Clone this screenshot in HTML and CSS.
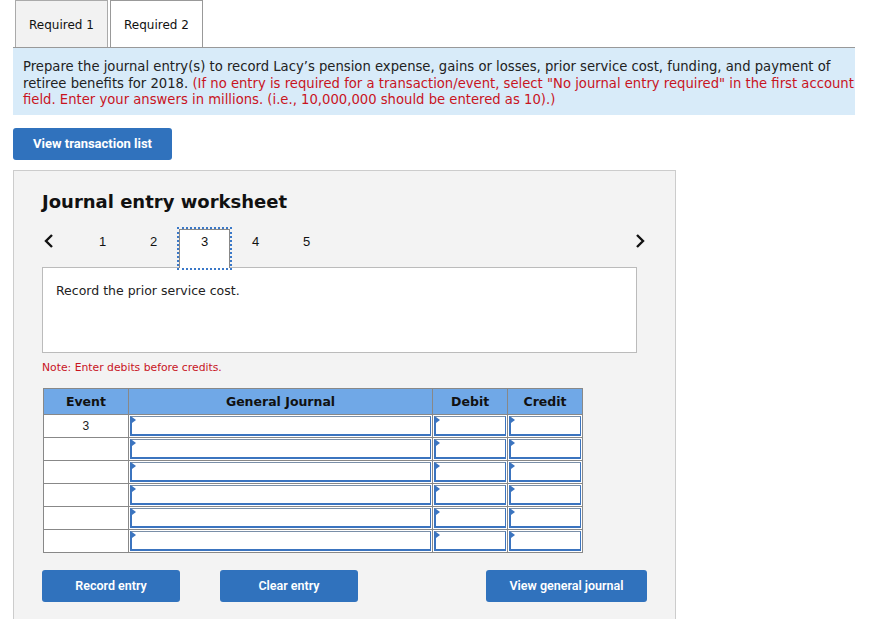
FILE: index.html
```html
<!DOCTYPE html>
<html lang="en">
<head>
    <meta charset="UTF-8">
    <title>Journal entry worksheet</title>
    <link rel="stylesheet" href="styles.css">
</head>
<body>
    <div class="page">
        <div class="tabs">
            <div class="tab">Required 1</div>
            <div class="tab active">Required 2</div>
        </div>

        <div class="instructions">
            Prepare the journal entry(s) to record Lacy’s pension expense, gains or losses, prior service cost, funding, and payment of retiree benefits for 2018.
            <span class="red">(If no entry is required for a transaction/event, select "No journal entry required" in the first account field. Enter your answers in millions. (i.e., 10,000,000 should be entered as 10).)</span>
        </div>

        <button class="btn btn-list">View transaction list</button>

        <div class="worksheet">
            <h2 class="ws-title">Journal entry worksheet</h2>

            <div class="nav">
                <span class="arrow">
                    <svg width="12" height="16" viewBox="0 0 12 16"><path d="M9 2 L3 8 L9 14" fill="none" stroke="#111" stroke-width="2.4"/></svg>
                </span>
                <span class="step">1</span>
                <span class="step">2</span>
                <span class="step current">3</span>
                <span class="step">4</span>
                <span class="step">5</span>
                <span class="arrow arrow-right">
                    <svg width="12" height="16" viewBox="0 0 12 16"><path d="M3 2 L9 8 L3 14" fill="none" stroke="#111" stroke-width="2.4"/></svg>
                </span>
            </div>

            <div class="desc">Record the prior service cost.</div>

            <div class="note">Note: Enter debits before credits.</div>

            <table class="journal">
                <thead>
                    <tr>
                        <th class="col-event">Event</th>
                        <th class="col-gj">General Journal</th>
                        <th class="col-amt">Debit</th>
                        <th class="col-amt">Credit</th>
                    </tr>
                </thead>
                <tbody>
                    <tr>
                        <td class="event">3</td>
                        <td><div class="field"></div></td>
                        <td><div class="field"></div></td>
                        <td><div class="field"></div></td>
                    </tr>
                    <tr>
                        <td class="event"></td>
                        <td><div class="field"></div></td>
                        <td><div class="field"></div></td>
                        <td><div class="field"></div></td>
                    </tr>
                    <tr>
                        <td class="event"></td>
                        <td><div class="field"></div></td>
                        <td><div class="field"></div></td>
                        <td><div class="field"></div></td>
                    </tr>
                    <tr>
                        <td class="event"></td>
                        <td><div class="field"></div></td>
                        <td><div class="field"></div></td>
                        <td><div class="field"></div></td>
                    </tr>
                    <tr>
                        <td class="event"></td>
                        <td><div class="field"></div></td>
                        <td><div class="field"></div></td>
                        <td><div class="field"></div></td>
                    </tr>
                    <tr>
                        <td class="event"></td>
                        <td><div class="field"></div></td>
                        <td><div class="field"></div></td>
                        <td><div class="field"></div></td>
                    </tr>
                </tbody>
            </table>

            <div class="actions">
                <button class="btn btn-action">Record entry</button>
                <button class="btn btn-action btn-clear">Clear entry</button>
                <button class="btn btn-action btn-journal">View general journal</button>
            </div>
        </div>
    </div>
</body>
</html>
```

FILE: styles.css
```css
* {
    margin: 0;
    padding: 0;
    box-sizing: border-box;
}

body {
    font-family: "DejaVu Sans", Verdana, sans-serif;
    color: #222;
    background: white;
    overflow: hidden;
}

.page {
    padding: 0 20px 0 13px;
}

/* Tabs */
.tabs {
    display: flex;
    gap: 2px;
    padding-left: 2px;
    height: 48px;
    border-bottom: 1px solid #999;
}

.tab {
    width: 93px;
    height: 47px;
    display: flex;
    align-items: center;
    justify-content: center;
    padding-top: 2px;
    background: #f2f2f2;
    border: 1px solid #aaa;
    border-bottom: none;
    font-size: 12px;
    color: #111;
}

.tab.active {
    background: white;
    border-color: #999;
}

.instructions {
    background: #d8ebf9;
    padding: 11px 1px 6px 10px;
    font-size: 13.2px;
    line-height: 16.5px;
    width: 842px;
}

.red {
    color: #c8141e;
}

/* Buttons */
.btn {
    border: none;
    border-radius: 3px;
    background: #3072bd;
    color: white;
    font-family: Roboto, "Liberation Sans", sans-serif;
    font-weight: 700;
    font-size: 12.5px;
    cursor: pointer;
    height: 32px;
}

.btn-list {
    margin-top: 13px;
    width: 159px;
    font-size: 13px;
}

/* Worksheet */
.worksheet {
    margin-top: 10px;
    width: 663px;
    height: 460px;
    background: #f3f3f3;
    border: 1px solid #ccc;
    padding: 20px 28px 0 28px;
}

.ws-title {
    font-size: 18px;
    font-weight: bold;
    line-height: 22px;
    color: #111;
}

.nav {
    display: flex;
    align-items: flex-start;
    width: 605px;
    height: 39px;
    margin-top: 16px;
    margin-bottom: -1px;
    position: relative;
    z-index: 1;
}

.arrow {
    width: 35px;
    display: flex;
    padding-left: 1px;
    padding-top: 4px;
}

.arrow-right {
    margin-left: auto;
    width: auto;
    padding-right: 1px;
}

.step {
    width: 51px;
    height: 39px;
    display: flex;
    justify-content: center;
    padding-top: 5px;
    font-family: "Liberation Sans", Arial, sans-serif;
    font-size: 13px;
    color: #111;
}

.step.current {
    background: white;
    border: 1px solid #888;
    border-bottom: none;
    outline: 2px dotted #3a78c8;
    outline-offset: 0;
    padding-top: 4px;
}

.desc {
    width: 595px;
    height: 86px;
    background: white;
    border: 1px solid #bbb;
    padding: 15px 13px;
    font-size: 12.5px;
    color: #222;
}

.note {
    margin-top: 8px;
    font-size: 10.8px;
    color: #c8141e;
}

/* Journal table */
.journal {
    margin-top: 14px;
    margin-left: 1px;
    border-collapse: collapse;
    width: 540px;
    background: white;
}

.journal th {
    background: #70a8e7;
    border: 1px solid #888;
    height: 26px;
    font-size: 12.5px;
    font-weight: bold;
    color: #111;
}

.col-event {
    width: 85px;
}

.col-gj {
    width: 305px;
}

.col-amt {
    width: 75px;
}

.journal td {
    border: 1px solid #888;
    height: 23px;
    padding: 1px;
}

.journal td.event {
    text-align: center;
    font-family: "Liberation Sans", Arial, sans-serif;
    font-size: 12px;
    color: #222;
    vertical-align: top;
    padding-top: 4px;
}

.field {
    position: relative;
    height: 20px;
    border: 1px solid #3b74bf;
    border-top-color: #7a8fa8;
    border-left-width: 2px;
    border-bottom-width: 2px;
}

.field::before {
    content: "";
    position: absolute;
    top: 0;
    left: 0;
    border-top: 3px solid transparent;
    border-bottom: 3px solid transparent;
    border-left: 4px solid #3b74bf;
}

/* Bottom actions */
.actions {
    display: flex;
    margin-top: 17px;
}

.btn-action {
    width: 138px;
    font-weight: 600;
    font-size: 12.5px;
}

.btn-clear {
    margin-left: 40px;
}

.btn-journal {
    margin-left: auto;
    width: 161px;
}
```
